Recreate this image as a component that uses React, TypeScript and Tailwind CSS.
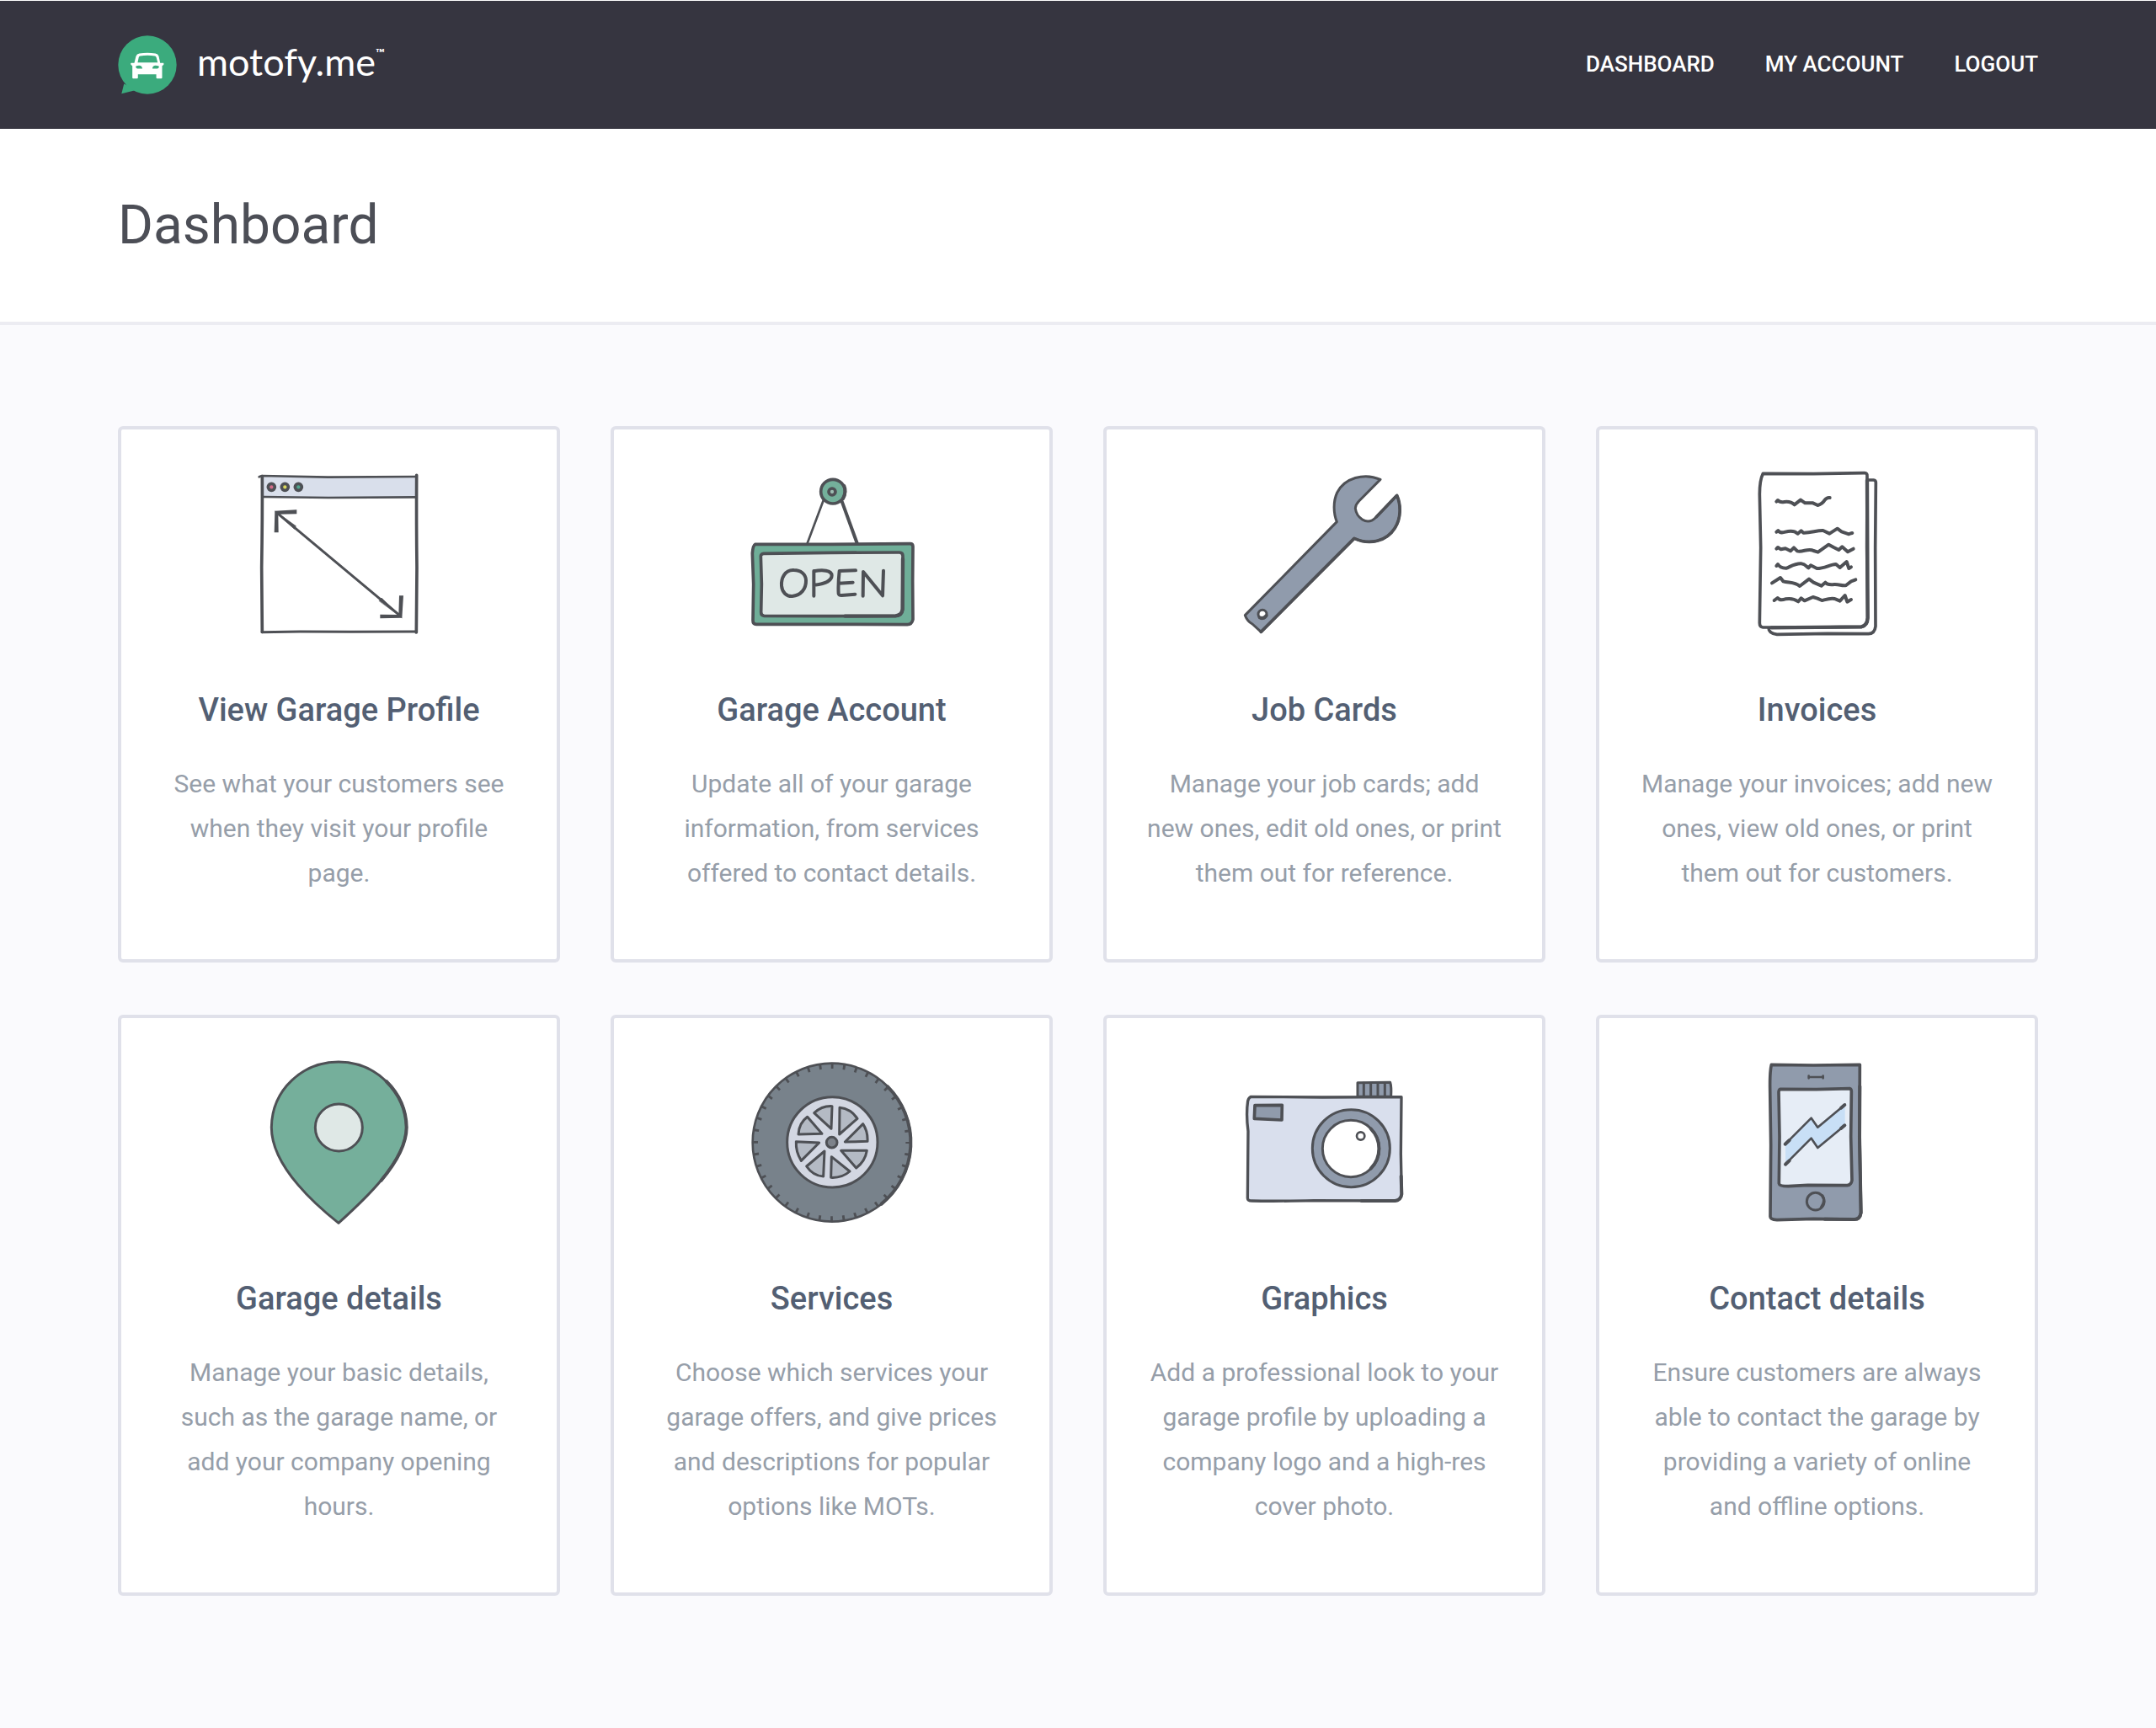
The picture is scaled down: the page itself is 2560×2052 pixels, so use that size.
import type { ReactNode } from "react";

const INK = "#4e5055";

function Logo() {
  return (
    <svg viewBox="60 124 212 212" className="size-[70px]" aria-hidden="true">
      <path d="M82 298 73 334 128 320Z" fill="#3bab7d" />
      <circle cx="166" cy="230" r="105" fill="#3bab7d" />
      <path
        fill="#fff"
        fillRule="evenodd"
        d="M107 223h12l6-24q3-9 12-10 29-5 58 0 9 1 12 10l5 24h12q3 5-1 8l-4 3v42q0 3-3 3h-15q-3 0-3-3v-12h-66v12q0 3-3 3h-14q-3 0-3-3v-42l-4-3q-4-4-1-8Zm24-1h72l-5-19q-1-4-5-5-26-4-53 0-4 1-5 5Zm-7 15q1 7 10 7h14q-1-12-12-12-12 0-12 5Zm84 0q0-5-12-5-12 0-12 12h14q9 0 10-7Z"
      />
    </svg>
  );
}

function Drawing({ viewBox, children }: { viewBox: string; children: ReactNode }) {
  return (
    <svg
      viewBox={viewBox}
      className="size-[200px]"
      fill="none"
      stroke={INK}
      strokeWidth="11"
      strokeLinecap="round"
      strokeLinejoin="round"
      aria-hidden="true"
    >
      {children}
    </svg>
  );
}

function BrowserIcon() {
  return (
    <Drawing viewBox="40 52 600 600">
      <path d="M65 77H614V150H66Z" fill="#d9dfeb" stroke="none" />
      <path d="M54 77 64 73 300 78 614 76" strokeWidth="8" />
      <path d="M67 148 300 151 612 149" strokeWidth="8" />
      <path d="M65 75Q66 220 63 400L65 629" />
      <path d="M615 71Q614 250 616 400L614 631" />
      <path d="M64 630 200 628 380 629 614 628" strokeWidth="9" />
      <g strokeWidth="11">
        <circle cx="98" cy="113" r="12" fill="#d36c89" />
        <circle cx="146" cy="113" r="12" fill="#d9d75e" />
        <circle cx="194" cy="113" r="12" fill="#4fa58e" />
      </g>
      <path d="M116 204 558 573" strokeWidth="9" />
      <path d="M112 200 185 252 180 262ZM562 578 490 508 482 518Z" fill={INK} strokeWidth="2" />
      <path d="M110 198 188 194V209L122 210 123 275H108Z" fill={INK} stroke="none" />
      <path d="M553 500H568L563 579 485 581V567L551 568Z" fill={INK} stroke="none" />
    </Drawing>
  );
}

function OpenSignIcon() {
  return (
    <Drawing viewBox="54 23 600 600">
      <path d="M323 132 266 284" strokeWidth="8" />
      <path d="M387 130 443 284" strokeWidth="12" />
      <circle cx="357" cy="100" r="43" fill="#74b09b" />
      <circle cx="354" cy="101" r="12" fill="#9dbdb2" />
      <path d="M397 80Q406 100 393 125" strokeWidth="12" />
      <path
        d="M80 288 350 288 632 286Q642 286 642 296L641 420 642 556Q638 574 622 574L350 573 84 573Q72 573 72 560L74 430 70 320Q72 292 80 288Z"
        fill="#6fae98"
      />
      <path
        d="M110 321 350 318 594 317Q606 317 606 330L605 520Q602 542 580 543L350 544 112 543Q101 542 101 530L103 430 100 330Q101 322 110 321Z"
        fill="#dfe8e6"
      />
      <path d="M606 340 605 520Q602 542 580 543L400 544" strokeWidth="13" />
      <g strokeWidth="12">
        <path d="M218 380C185 378 172 410 174 436 176 460 192 474 212 473 244 470 262 446 261 416 260 394 242 380 218 380Z" />
        <path d="M289 383 289 472M289 384C320 378 352 380 353 399 353 420 322 430 291 433" />
        <path d="M438 381 380 383Q375 430 377 464 378 470 388 470L436 466M378 427 428 424" />
        <path d="M464 472 465 386 534 471 537 382" />
      </g>
    </Drawing>
  );
}

function WrenchIcon() {
  return (
    <Drawing viewBox="40 23 600 600">
      <path
        d="M538 57C480 32 410 52 384 104 370 134 370 176 383 208L56 541Q64 562 82 572L113 600 445 267C500 292 560 278 590 230 612 196 612 148 597 114L524 190Q500 216 474 200 452 186 449 160 450 146 462 134Z"
        fill="#909bac"
        strokeWidth="9"
      />
      <path d="M113 600 445 267C500 292 560 278 590 230 612 196 612 148 597 114L524 190" />
      <circle cx="118" cy="537" r="15" fill="#fff" strokeWidth="9" />
      <path d="M108 549Q120 556 132 542" strokeWidth="12" />
    </Drawing>
  );
}

function PaperIcon() {
  return (
    <Drawing viewBox="-36 23 600 600">
      <path
        d="M440 59H464Q472 60 472 68L470 300 471 580Q468 606 446 607L300 606 120 609Q90 606 90 584"
        fill="#fff"
      />
      <path
        d="M70 36 250 37 432 34Q442 34 441 46L440 300 443 550Q442 578 420 582L250 584 70 584Q58 582 58 568L62 300 58 110Q58 60 70 36Z"
        fill="#fff"
      />
      <path d="M441 60 443 550Q442 578 420 582L100 585" strokeWidth="13" />
      <g strokeWidth="12">
        <path d="M118 136 123 131Q130 140 146 137 168 134 182 147L204 130 220 141 248 141 265 149Q282 144 290 130 298 120 308 122" />
        <path d="M118 244 124 239Q130 250 150 244 178 236 194 250L206 240 214 247C240 248 262 238 284 239L307 250 335 232 350 243 376 252 380 250 388 248" />
        <path d="M118 304 123 299 134 306 150 303 168 312 180 300 192 312C210 318 232 300 250 311L266 316 304 289 322 299 340 308 352 297 372 315 392 304" />
        <path d="M118 365 123 359Q132 374 154 373C174 364 186 356 206 357 220 358 226 368 232 372L240 363 262 374C290 374 308 360 330 359L344 371 368 350 376 374 384 369" />
        <path d="M102 426 132 407 142 420C162 426 182 420 201 437L234 412 250 424 278 436 292 424Q300 434 324 431C344 430 352 438 366 434L384 420 400 414" />
        <path d="M110 488 122 479Q130 490 150 483 176 478 196 492L206 480 218 489 248 476 264 481 280 488C296 484 318 476 330 484L344 490 362 470 370 493 384 485" />
      </g>
    </Drawing>
  );
}

function PinIcon() {
  return (
    <Drawing viewBox="10 51 600 600">
      <path
        d="M307 637C240 584 68 440 68 296 70 160 180 63 307 63 440 63 546 170 549 296 548 420 390 562 307 637Z"
        fill="#75af9b"
        strokeWidth="9"
      />
      <path d="M477 132C520 175 548 233 549 296 549 358 509 425 459 485" strokeWidth="12" />
      <circle cx="308" cy="297" r="84" fill="#dfe8e6" strokeWidth="9" />
    </Drawing>
  );
}

const rimWindows = [
  "M260 216Q288 190 324 192L321 272Z",
  "M351 197Q392 202 414 236L350 292Z",
  "M434 255Q452 282 450 317L370 319Z",
  "M448 350Q442 388 410 412L356 350Z",
  "M322 372 387 424Q360 448 320 446Z",
  "M297 352 293 442Q256 440 233 406Z",
  "M278 322 214 386Q194 354 196 318Z",
  "M204 292Q206 252 236 230L288 290Z",
];

function WheelIcon() {
  return (
    <Drawing viewBox="24 22 600 600">
      <circle cx="323" cy="321" r="282" fill="#78828b" strokeWidth="8" />
      <path d="M522 122A282 282 0 0 1 500 540" strokeWidth="12" />
      {/* tread marks */}
      <circle
        cx="323"
        cy="321"
        r="272"
        strokeWidth="18"
        strokeLinecap="butt"
        pathLength={40}
        strokeDasharray="0.2 0.8"
        strokeDashoffset="0.1"
      />
      <circle cx="325" cy="320" r="161" fill="#d3d7e2" strokeWidth="9" />
      {rimWindows.map((d) => (
        <path key={d} d={d} fill="#b4bac4" strokeWidth="9" />
      ))}
      <circle cx="323" cy="321" r="19" fill="#7d828a" strokeWidth="9" />
    </Drawing>
  );
}

function CameraIcon() {
  return (
    <Drawing viewBox="39 -39 600 600">
      <path d="M456 47 572 46Q577 60 575 96L456 97Z" fill="#909bac" strokeWidth="9" />
      <path d="M478 48V94M503 48V94M528 48V94M553 48V94" strokeWidth="9" />
      <path
        d="M76 97 330 99 612 98 610 300 613 444Q610 467 588 468L300 467Q160 470 80 468 64 468 64 458L66 220Q58 160 65 112 68 100 76 97Z"
        fill="#d9dfed"
        strokeWidth="10"
      />
      <path d="M611 380 613 444Q610 467 588 468L470 468" strokeWidth="12" />
      <path d="M90 128 187 127 186 180 88 175Z" fill="#909bac" />
      <circle cx="433" cy="281" r="138" fill="#909bac" strokeWidth="9" />
      <circle cx="432" cy="282" r="101" fill="#fff" strokeWidth="9" />
      <path d="M503 211A101 101 0 0 1 503 353" strokeWidth="12" />
      <circle cx="467" cy="237" r="14" fill="#fff" strokeWidth="8" />
    </Drawing>
  );
}

function PhoneIcon() {
  return (
    <Drawing viewBox="-66 21 600 600">
      <path
        d="M70 43 220 45 385 43 384 300 389 570Q386 594 366 594L220 592 90 596Q66 594 66 584L68 330 65 130Q64 70 70 43Z"
        fill="#909bac"
      />
      <path d="M385 120 384 300 389 570Q386 594 366 594L260 593" strokeWidth="12" />
      <path
        d="M102 130 230 131 350 128Q356 130 355 142L353 300 357 455Q354 472 340 473L200 472 130 476Q98 476 97 466L99 300 96 140Q97 131 102 130Z"
        fill="#e6edf6"
      />
      <path d="M120 325 212 233 235 266 332 185V259L235 339 212 305 120 397Z" fill="#c8dff6" stroke="none" />
      <path d="M120 325 212 233 235 266 332 185M120 397 212 305 235 339 332 259" strokeWidth="8" />
      <path d="M119 326 134 312M318 197 331 186M120 398 134 385M318 270 331 259" strokeWidth="12" />
      <path d="M203 87H254M203 83V91M254 83V91" strokeWidth="8" />
      <circle cx="227" cy="530" r="31" strokeWidth="9" />
      <path d="M252 510Q264 530 248 550" strokeWidth="10" />
    </Drawing>
  );
}

const navLinks = ["Dashboard", "My Account", "Logout"];

const cards = [
  {
    title: "View Garage Profile",
    text: "See what your customers see when they visit your profile page.",
    icon: <BrowserIcon />,
  },
  {
    title: "Garage Account",
    text: "Update all of your garage information, from services offered to contact details.",
    icon: <OpenSignIcon />,
  },
  {
    title: "Job Cards",
    text: "Manage your job cards; add new ones, edit old ones, or print them out for reference.",
    icon: <WrenchIcon />,
  },
  {
    title: "Invoices",
    text: "Manage your invoices; add new ones, view old ones, or print them out for customers.",
    icon: <PaperIcon />,
  },
  {
    title: "Garage details",
    text: "Manage your basic details, such as the garage name, or add your company opening hours.",
    icon: <PinIcon />,
  },
  {
    title: "Services",
    text: "Choose which services your garage offers, and give prices and descriptions for popular options like MOTs.",
    icon: <WheelIcon />,
  },
  {
    title: "Graphics",
    text: "Add a professional look to your garage profile by uploading a company logo and a high-res cover photo.",
    icon: <CameraIcon />,
  },
  {
    title: "Contact details",
    text: "Ensure customers are always able to contact the garage by providing a variety of online and offline options.",
    icon: <PhoneIcon />,
  },
];

export default function App() {
  return (
    <div className="min-h-screen bg-[#fafafd] font-['Roboto',sans-serif]">
      <header className="flex items-center justify-between border-t border-white bg-[#363540] px-[140px] py-[41px] text-white">
        <a href="#" className="flex items-center gap-6">
          <Logo />
          <span className="flex items-start pb-2 font-['Lato',sans-serif] text-[45px] leading-[56px]">
            motofy.me
            <span className="text-[14px] leading-[36px] font-bold">™</span>
          </span>
        </a>
        <nav className="flex gap-[60px] pb-0.5 text-[26px] leading-[32px] font-medium uppercase">
          {navLinks.map((label) => (
            <a key={label} href="#">
              {label}
            </a>
          ))}
        </nav>
      </header>

      <div className="border-b-4 border-[#ececf2] bg-white px-[140px] pt-[75px] pb-[74px]">
        <h1 className="text-[64px] leading-[80px] text-[#4c4e56]">Dashboard</h1>
      </div>

      <main className="grid grid-cols-4 gap-x-[60px] gap-y-[62px] px-[140px] py-[120px]">
        {cards.map(({ title, text, icon }) => (
          <a
            key={title}
            href="#"
            className="flex flex-col items-center rounded-md border-4 border-[#e0e1ea] bg-white px-12 pt-12 pb-[76px] text-center"
          >
            {icon}
            <h2 className="mt-[61px] text-[38px] leading-[48px] font-medium text-[#535f73]">{title}</h2>
            <p className="mt-[37px] text-[30px] leading-[53px] text-[#969ea9]">{text}</p>
          </a>
        ))}
      </main>
    </div>
  );
}
